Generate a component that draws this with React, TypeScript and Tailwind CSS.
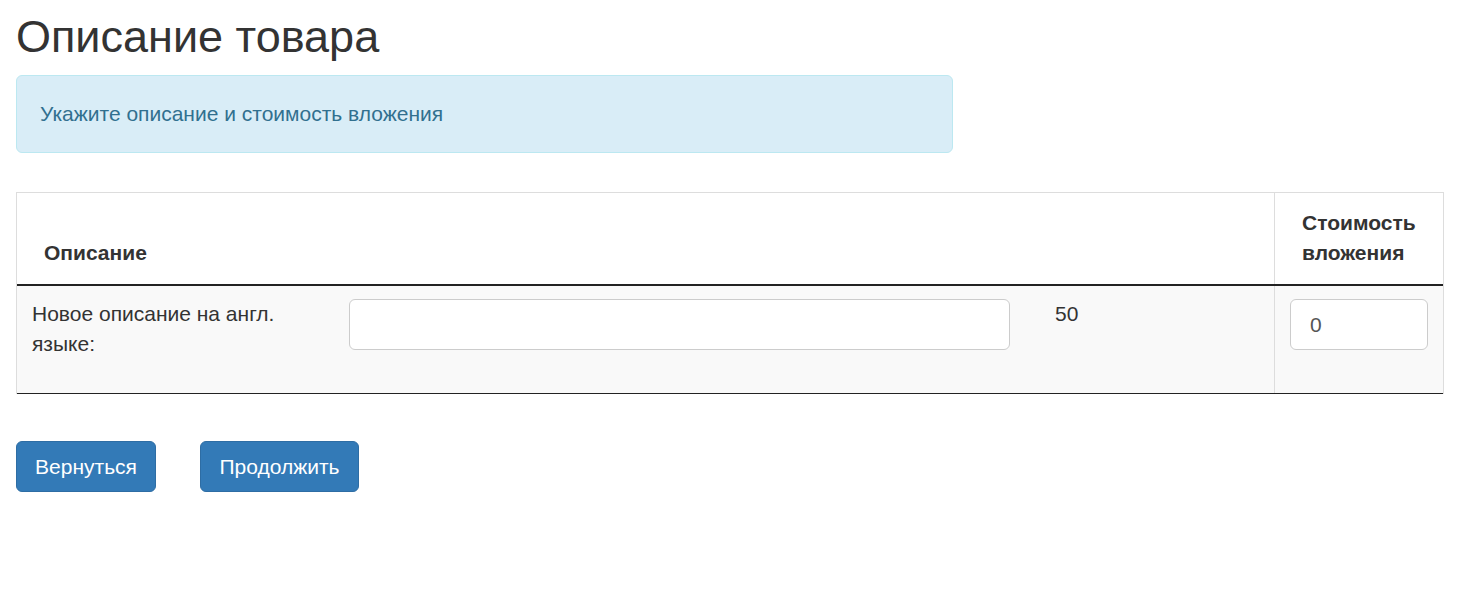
export default function App() {
  return (
    <div className="bg-white min-h-[600px] px-4 text-[#333] font-['Liberation_Sans',Arial,sans-serif]">
      <h1 className="pt-[12px] text-[45px] leading-[50px] font-normal text-[#333]">Описание товара</h1>
      <div className="mt-[13px] w-[937px] h-[78px] rounded-[6px] border border-[#bce8f1] bg-[#d9edf7] px-[23px] py-[23px] text-[21px] leading-[30px] text-[#31708f]">
        Укажите описание и стоимость вложения
      </div>

      <div className="mt-[39px] w-[1428px] border-t border-l border-r border-[#ddd]">
        <div className="flex border-b-2 border-[#222]">
          <div className="flex-1 flex items-end pl-[27px] pb-[16px] pt-[15px] text-[21px] leading-[30px] font-bold">
            Описание
          </div>
          <div className="w-[169px] border-l border-[#ddd] pl-[27px] pt-[15px] pb-[16px] text-[21px] leading-[30px] font-bold">
            Стоимость<br />вложения
          </div>
        </div>
        <div className="flex bg-[#f9f9f9] border-b border-[#222] h-[108px]">
          <div className="flex-1 flex items-start pl-[15px] pt-[13px]">
            <div className="w-[290px] text-[21px] leading-[30px]">Новое описание на англ. языке:</div>
            <div className="ml-[27px] w-[661px] h-[51px] rounded-[6px] border border-[#ccc] bg-white"></div>
            <div className="ml-[45px] text-[21px] leading-[30px]">50</div>
          </div>
          <div className="w-[169px] border-l border-[#ddd] pl-[15px] pt-[13px]">
            <div className="w-[138px] h-[51px] rounded-[6px] border border-[#ccc] bg-white pl-[19px] flex items-center text-[21px] text-[#555]">
              0
            </div>
          </div>
        </div>
      </div>

      <div className="mt-[47px] flex gap-[44px]">
        <button className="h-[51px] w-[140px] rounded-[6px] border border-[#2e6da4] bg-[#337ab7] text-white text-[21px] leading-[30px]">
          Вернуться
        </button>
        <button className="h-[51px] w-[159px] rounded-[6px] border border-[#2e6da4] bg-[#337ab7] text-white text-[21px] leading-[30px]">
          Продолжить
        </button>
      </div>
    </div>
  );
}
